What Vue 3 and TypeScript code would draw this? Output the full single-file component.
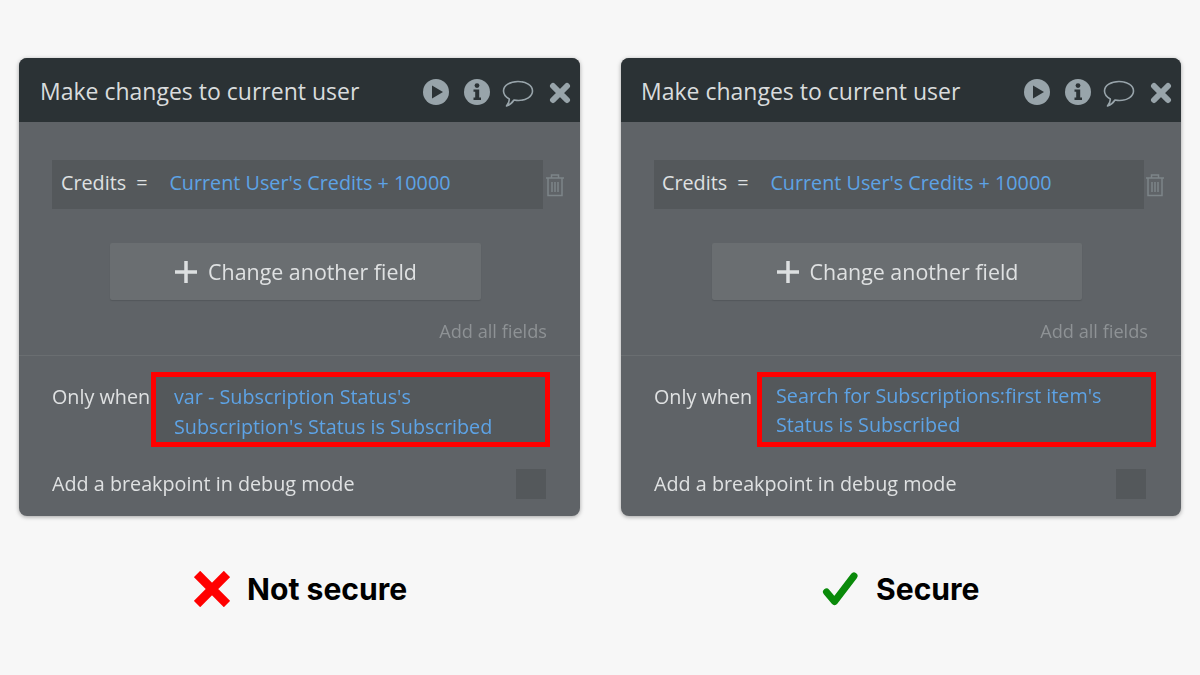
<script setup lang="ts">
interface Panel {
  id: string
  condition: string[]
  verdict: string
  ok: boolean
}

const panels: Panel[] = [
  {
    id: 'bad',
    condition: ["var - Subscription Status's", "Subscription's Status is Subscribed"],
    verdict: 'Not secure',
    ok: false,
  },
  {
    id: 'good',
    condition: ["Search for Subscriptions:first item's", 'Status is Subscribed'],
    verdict: 'Secure',
    ok: true,
  },
]
</script>

<template>
  <div class="page">
    <div v-for="p in panels" :key="p.id" class="column" :class="{ ok: p.ok }">
      <div class="panel">
        <div class="head">
          <span class="title">Make changes to current user</span>
          <div class="tools">
            <svg class="play" width="28" height="28" viewBox="0 0 28 28">
              <circle cx="14" cy="14" r="13" fill="#98a4aa" />
              <path d="M10 7.5 L21 14 L10 20.5 Z" fill="#2b3235" />
            </svg>
            <svg class="info" width="26" height="26" viewBox="0 0 26 26">
              <circle cx="13" cy="13" r="13" fill="#98a4aa" />
              <circle cx="13" cy="6.6" r="2.4" fill="#2b3235" />
              <path d="M9.5 10.5 H15.2 V18.6 H17 V21 H9.5 V18.6 H11.2 V12.8 H9.5 Z" fill="#2b3235" />
            </svg>
            <svg class="bubble" width="32" height="28" viewBox="0 0 32 28">
              <path d="M16 2.500 C24 2.500 30.500 6.500 30.500 12 C30.500 17.500 24 21.500 16.500 21.500 C14.800 21.500 13.500 21.300 12 21 C10.500 23.500 8.500 25.500 4.500 27 C6.500 24.500 7.500 22.500 7.300 20 C3.800 18 1.500 15.300 1.500 12 C1.500 6.500 8 2.500 16 2.500 Z" fill="none" stroke="#98a4aa" stroke-width="1.6" stroke-linejoin="round" />
            </svg>
            <svg class="close" width="22" height="22" viewBox="0 0 22 22">
              <path d="M4 4 L18 18 M18 4 L4 18" stroke="#98a4aa" stroke-width="6" stroke-linecap="round" />
            </svg>
          </div>
        </div>

        <div class="top">
          <div class="assign-row">
            <div class="assign">
              <span class="field">Credits</span>
              <span class="eq">=</span>
              <span class="value">Current User's Credits + 10000</span>
            </div>
            <svg class="trash" width="20" height="24" viewBox="0 0 20 24">
              <path d="M1 5 H19 M6.500 5 V2 H13.500 V5 M3 5 V22.500 H17 V5 M7 9 V19 M10 9 V19 M13 9 V19" fill="none" stroke="#7d8589" stroke-width="1.500" />
            </svg>
          </div>

          <div class="add-btn">
            <svg width="24" height="24" viewBox="0 0 24 24">
              <path d="M12 1 V23 M1 12 H23" stroke="#dcdfe0" stroke-width="3.500" />
            </svg>
            <span>Change another field</span>
          </div>

          <div class="all-fields">Add all fields</div>
        </div>

        <div class="bottom">
          <div class="when-row">
            <span class="when-label">Only when</span>
            <div class="when-box">
              <div v-for="line in p.condition" :key="line">{{ line }}</div>
            </div>
          </div>
          <div class="debug-row">
            <span>Add a breakpoint in debug mode</span>
            <span class="check"></span>
          </div>
        </div>
      </div>

      <div class="verdict">
        <svg v-if="p.ok" width="38" height="36" viewBox="0 0 38 36">
          <path d="M5.500 21 L13.500 30.500 L33 5" fill="none" stroke="#0a8a0a" stroke-width="7" stroke-linecap="round" stroke-linejoin="round" />
        </svg>
        <svg v-else width="36" height="36" viewBox="0 0 36 36">
          <path d="M3 3 L33 33 M33 3 L3 33" stroke="#ff0000" stroke-width="9" />
        </svg>
        <span>{{ p.verdict }}</span>
      </div>
    </div>
  </div>
</template>

<style>
body {
  background: #f7f7f7;
}
</style>

<style scoped>
.page {
  width: 1200px;
  height: 675px;
  box-sizing: border-box;
  padding: 58px 19px 0;
  display: flex;
  gap: 41px;
  background: #f7f7f7;
  overflow: hidden;
}
.column {
  width: 561px;
  flex: none;
}
.column.ok {
  width: 560px;
}
.panel {
  height: 458px;
  border-radius: 8px;
  overflow: hidden;
  background: #5f6367;
  box-shadow: 0 1px 4px rgba(0, 0, 0, 0.35);
  font-family: "Open Sans", sans-serif;
  font-size: 19.750px;
  color: #dfe1e2;
  display: flex;
  flex-direction: column;
  filter: blur(0.35px);
}
.head {
  height: 64px;
  flex: none;
  background: #2b3235;
  display: flex;
  align-items: center;
  justify-content: space-between;
  padding: 0 9px 0 21px;
}
.ok .head {
  padding: 0 9px 0 20px;
}
.title {
  font-size: 23px;
  color: #d9dcdd;
  padding-top: 1px;
}
.tools {
  display: flex;
  align-items: center;
  gap: 14px;
}
.tools svg {
  display: block;
}
.tools .play {
  margin-top: 4px;
}
.tools .info {
  margin-top: 4px;
  margin-right: -2px;
}
.tools .bubble {
  margin-top: 5px;
}
.tools .close {
  margin-top: 6px;
  margin-left: 1px;
}
.top {
  flex: 1;
  padding: 38px 33px 0;
  border-bottom: 1px solid #6a6e71;
}
.assign-row {
  display: flex;
  align-items: center;
  gap: 0;
  margin-right: -22px;
}
.assign {
  width: 491px;
  height: 49px;
  flex: none;
  background: #54585b;
  display: flex;
  align-items: center;
  padding: 0 0 5px 9px;
  box-sizing: border-box;
}
.ok .assign {
  width: 490px;
  padding-left: 8px;
}
.eq {
  margin-left: 10px;
}
.value {
  margin-left: 22px;
  color: #5da3e6;
}
.trash {
  margin-left: 2px;
}
.ok .trash {
  margin-left: 1px;
}
.add-btn {
  width: 371px;
  height: 57px;
  margin: 34px 0 0 58px;
  box-sizing: border-box;
  background: #6a6e71;
  border-radius: 2px;
  display: flex;
  align-items: center;
  justify-content: center;
  gap: 10px;
  font-size: 21.400px;
  box-shadow: 0 1px 1px rgba(0, 0, 0, 0.12);
}
.ok .add-btn {
  width: 370px;
}
.all-fields {
  margin: 19px 0 0 0;
  text-align: right;
  font-size: 18.200px;
  color: #8e9295;
}
.bottom {
  height: 160px;
  flex: none;
  box-sizing: border-box;
  padding: 16px 34px 0 33px;
}
.ok .bottom {
  padding-right: 35px;
}
.when-row {
  display: flex;
  align-items: flex-start;
}
.when-label {
  width: 99px;
  flex: none;
  margin-top: 11px;
}
.when-box {
  width: 399px;
  height: 75px;
  flex: none;
  box-sizing: border-box;
  border: 5px solid #ff0000;
  background: #54585b;
  padding: 5px 0 0 18px;
  color: #5da3e6;
  line-height: 29.500px;
}
.ok .when-box {
  margin-left: 4px;
  padding: 4px 0 0 14px;
  line-height: 29px;
}
.debug-row {
  margin-top: 21px;
  display: flex;
  align-items: center;
  justify-content: space-between;
}
.check {
  width: 30px;
  height: 30px;
  margin-top: 1px;
  background: #54585b;
}
.verdict {
  margin: 55px 0 0 175px;
  display: flex;
  align-items: center;
  gap: 17px;
  font-family: Inter, sans-serif;
  font-weight: 700;
  font-size: 30.100px;
  color: #000;
}
.ok .verdict {
  margin-left: 200px;
  gap: 17px;
}
</style>
